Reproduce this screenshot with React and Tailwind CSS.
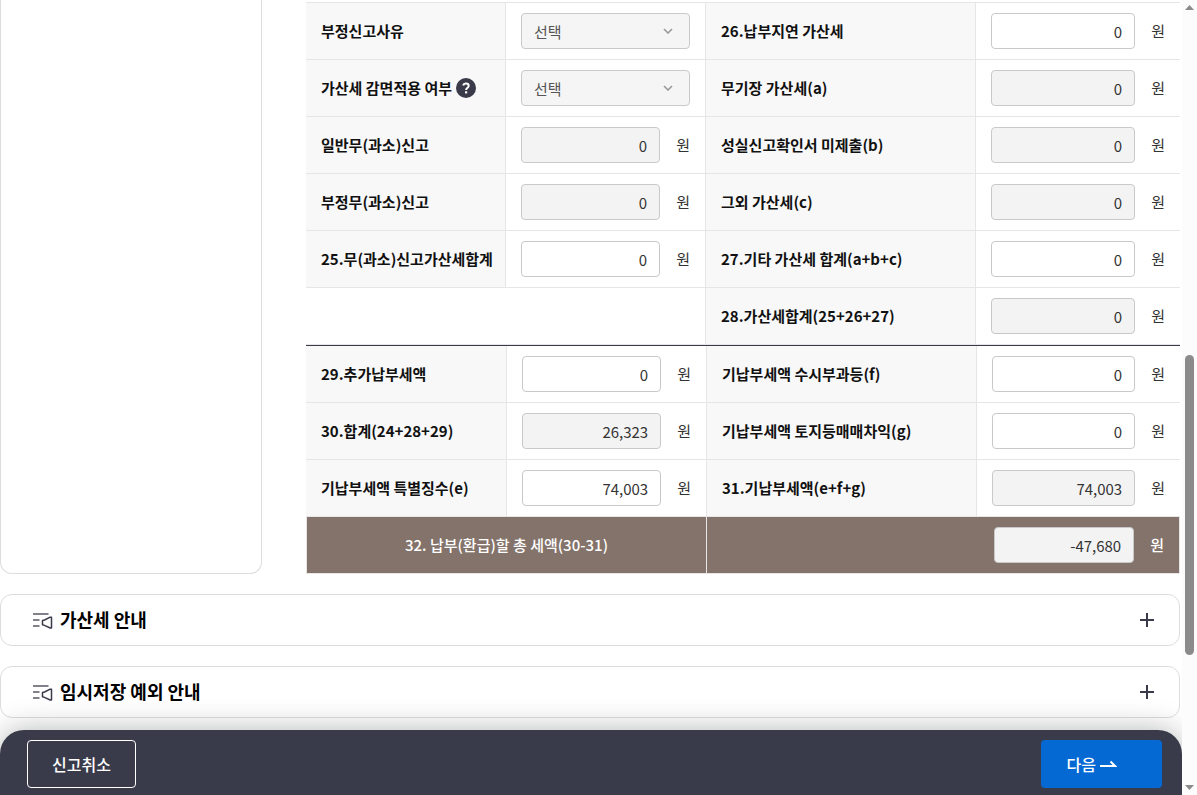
import { useState } from "react";

const UNIT = "원";

const penaltyRows = [
  [
    { id: "fraudReason", label: "부정신고사유", type: "select" },
    { id: "f26", label: "26.납부지연 가산세", value: "0" },
  ],
  [
    { id: "reduction", label: "가산세 감면적용 여부", type: "select", help: true },
    { id: "a", label: "무기장 가산세(a)", value: "0", locked: true },
  ],
  [
    { id: "general", label: "일반무(과소)신고", value: "0", locked: true },
    { id: "b", label: "성실신고확인서 미제출(b)", value: "0", locked: true },
  ],
  [
    { id: "fraud", label: "부정무(과소)신고", value: "0", locked: true },
    { id: "c", label: "그외 가산세(c)", value: "0", locked: true },
  ],
  [
    { id: "f25", label: "25.무(과소)신고가산세합계", value: "0" },
    { id: "f27", label: "27.기타 가산세 합계(a+b+c)", value: "0" },
  ],
  [null, { id: "f28", label: "28.가산세합계(25+26+27)", value: "0", locked: true }],
];

const paymentRows = [
  [
    { id: "f29", label: "29.추가납부세액", value: "0" },
    { id: "f", label: "기납부세액 수시부과등(f)", value: "0" },
  ],
  [
    { id: "f30", label: "30.합계(24+28+29)", value: "26,323", locked: true },
    { id: "g", label: "기납부세액 토지등매매차익(g)", value: "0" },
  ],
  [
    { id: "e", label: "기납부세액 특별징수(e)", value: "74,003" },
    { id: "f31", label: "31.기납부세액(e+f+g)", value: "74,003", locked: true },
  ],
];

const guides = ["가산세 안내", "임시저장 예외 안내"];

const AmountInput = ({ id, value, locked }) => {
  const [amount, setAmount] = useState(value);

  return (
    <input
      id={id}
      type="text"
      value={amount}
      readOnly={locked}
      onChange={(e) => setAmount(e.target.value)}
      className={`h-9 w-full min-w-0 flex-1 rounded border border-[#c9c9c9] px-3 text-right text-[15px] font-normal text-[#333] ${
        locked ? "bg-[#f3f3f3]" : "bg-white"
      }`}
    />
  );
};

const SelectBox = ({ id }) => (
  <div className="relative">
    <select
      id={id}
      disabled
      className="block h-9 w-full appearance-none rounded border border-[#c9c9c9] bg-[#f5f5f5] px-3 pt-0.5 text-[15px] text-[#555] opacity-100"
    >
      <option>선택</option>
    </select>
    <svg
      viewBox="0 0 10 6"
      className="pointer-events-none absolute top-[15px] right-[17px] h-1.5 w-2.5"
      fill="none"
      stroke="#999"
      strokeWidth="1.6"
    >
      <path d="M1 1 5 5 9 1" />
    </svg>
  </div>
);

const FieldCells = ({ field }) => (
  <>
    <th scope="row" className="h-[57px] border-r border-b border-[#e6e6e6] bg-[#f8f8f8] px-[15px] text-left font-bold text-[#111]">
      <div className="flex items-center gap-1 whitespace-nowrap">
        <label htmlFor={field.id}>{field.label}</label>
        {field.help && (
          <button
            type="button"
            aria-label="도움말"
            className="flex size-5 items-center justify-center rounded-full bg-[#3a3b4a] text-white"
          >
            <svg viewBox="0 0 20 20" className="size-5" fill="none" stroke="currentColor" strokeWidth="2">
              <path d="M7.2 7.6C7.6 6.2 8.6 5.6 10 5.6c1.6 0 2.7.9 2.7 2.3 0 1.8-2.6 2-2.6 4.2" />
              <path d="M10.1 13.3v2.1" strokeWidth="2.2" />
            </svg>
          </button>
        )}
      </div>
    </th>
    <td className="border-r border-b border-[#e6e6e6] px-[15px] last:border-r-0">
      {field.type === "select" ? (
        <SelectBox id={field.id} />
      ) : (
        <div className="flex items-center gap-4">
          <AmountInput {...field} />
          <span>{UNIT}</span>
        </div>
      )}
    </td>
  </>
);

const FieldRows = ({ rows }) =>
  rows.map(([left, right]) => (
    <tr key={right.id}>
      {left ? (
        <FieldCells field={left} />
      ) : (
        <td colSpan={2} className="border-r border-b border-[#e6e6e6]" />
      )}
      <FieldCells field={right} />
    </tr>
  ));

const TaxTables = () => (
  <div className="min-w-0 flex-1 text-[15px] text-[#333]">
    <table className="w-full table-fixed border-separate border-spacing-0 border-t border-[#e6e6e6]">
      <colgroup>
        <col className="w-[200px]" />
        <col className="w-[200px]" />
        <col className="w-[270px]" />
        <col />
      </colgroup>
      <tbody>
        <FieldRows rows={penaltyRows} />
      </tbody>
    </table>

    <table className="w-full table-fixed border-separate border-spacing-0 border-t border-[#3a3b4a]">
      <colgroup>
        <col className="w-[201px]" />
        <col className="w-[200px]" />
        <col className="w-[270px]" />
        <col />
      </colgroup>
      <tbody>
        <FieldRows rows={paymentRows} />
        {/* total */}
        <tr className="bg-[#84736a] font-medium text-white">
          <th scope="row" colSpan={2} className="h-[57px] border-r border-b border-l border-[#e6e6e6] font-medium">
            <label htmlFor="f32">32. 납부(환급)할 총 세액(30-31)</label>
          </th>
          <td colSpan={2} className="border-r border-b border-[#e6e6e6] px-[15px]">
            <div className="flex items-center justify-end gap-4">
              <div className="flex w-[140px]">
                <AmountInput id="f32" value="-47,680" locked />
              </div>
              <span>{UNIT}</span>
            </div>
          </td>
        </tr>
      </tbody>
    </table>
  </div>
);

const GuideIcon = () => (
  <svg viewBox="0 0 20 20" className="size-5" fill="none" stroke="#3a3b4a">
    <path d="M0 5h15.5M0 11h6.5M0 17h6.5" strokeWidth="1.6" strokeOpacity="0.85" />
    <path d="M9.5 11.5 11.5 11l5.7-2.8h1.3v10.8h-1.3l-5.7-2.6-2-.6z" strokeWidth="1.5" strokeLinejoin="round" />
  </svg>
);

const Guide = ({ title }) => {
  const [open, setOpen] = useState(false);

  return (
    <section className="rounded-xl border border-[#ddd] bg-white">
      <button
        type="button"
        aria-expanded={open}
        onClick={() => setOpen(!open)}
        className="flex h-[50px] w-full items-center justify-between pr-[25px] pl-8"
      >
        <span className="flex items-center gap-[7px] pb-0.5 text-lg font-bold text-black">
          <GuideIcon />
          {title}
        </span>
        <svg viewBox="0 0 14 14" className="size-3.5" stroke="#3a3b4a" strokeWidth="2">
          <path d="M7 0v14M0 7h14" />
        </svg>
      </button>
    </section>
  );
};

const ActionBar = () => (
  <footer className="absolute inset-x-0 bottom-0 flex justify-between rounded-t-3xl bg-[#3a3b4a] pt-2.5 pr-5 pb-[7px] pl-[27px] text-base font-medium text-white shadow-[0_0_30px_rgba(0,20,10,0.3)]">
    <button type="button" className="h-12 rounded border border-white px-6">
      신고취소
    </button>
    <button type="button" className="flex h-12 items-center gap-1 rounded bg-[#0569d4] pr-[45px] pl-[26px]">
      다음
      <svg viewBox="0 0 17 8" className="h-2 w-[17px]" fill="none" stroke="currentColor" strokeWidth="2">
        <path d="M0 6h15L10.5 1.5" />
      </svg>
    </button>
  </footer>
);

const ScrollTrack = () => (
  <div className="flex w-[15px] shrink-0 flex-col items-center bg-[#fcfcfc] py-[5px]" aria-hidden="true">
    <svg viewBox="0 0 9 5" className="h-[5px] w-[9px]" fill="#8b8b8b">
      <path d="M0 5 4.5 0 9 5z" />
    </svg>
    <div className="grow-345" />
    <div className="h-[300px] w-[9px] rounded-full bg-[#8b8b8b]" />
    <div className="grow-130" />
    <svg viewBox="0 0 9 5" className="h-[5px] w-[9px]" fill="#8b8b8b">
      <path d="M0 0h9L4.5 5z" />
    </svg>
  </div>
);

const App = () => (
  <div className="flex h-screen overflow-hidden bg-white font-['Noto_Sans_CJK_KR',sans-serif]">
    <div className="relative min-w-0 flex-1 overflow-hidden">
      <main className="flex flex-col gap-5 pr-0.5">
        <div className="flex gap-11">
          <aside className="w-[262px] shrink-0 rounded-b-xl border border-t-0 border-[#ddd]" />
          <div className="min-w-0 flex-1 pt-0.5">
            <TaxTables />
          </div>
        </div>
        {guides.map((title) => (
          <Guide key={title} title={title} />
        ))}
      </main>
      <ActionBar />
    </div>
    <ScrollTrack />
  </div>
);

export default App;
